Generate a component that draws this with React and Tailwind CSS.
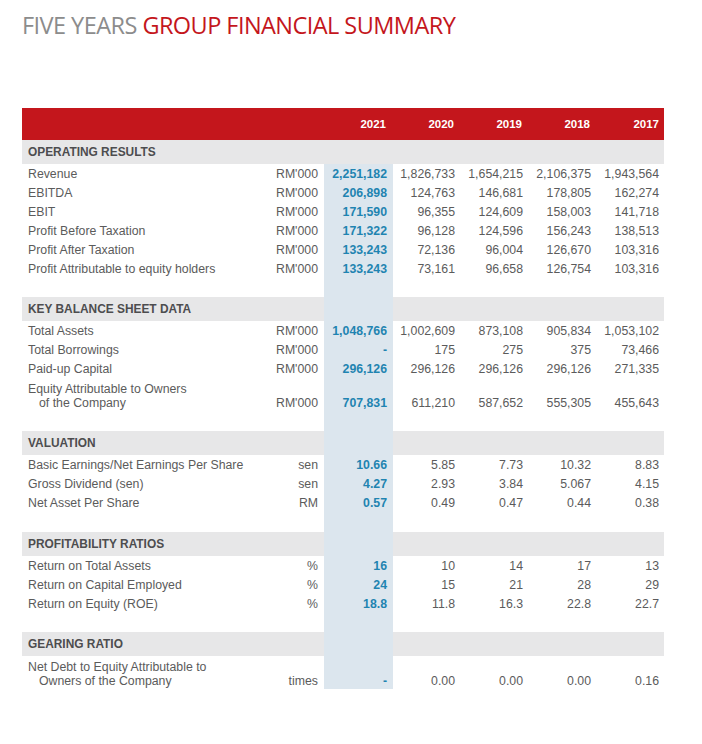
const years = ["2021", "2020", "2019", "2018", "2017"];

const sections = [
  {
    title: "OPERATING RESULTS",
    first: true,
    rows: [
      ["Revenue", "RM'000", ["2,251,182", "1,826,733", "1,654,215", "2,106,375", "1,943,564"]],
      ["EBITDA", "RM'000", ["206,898", "124,763", "146,681", "178,805", "162,274"]],
      ["EBIT", "RM'000", ["171,590", "96,355", "124,609", "158,003", "141,718"]],
      ["Profit Before Taxation", "RM'000", ["171,322", "96,128", "124,596", "156,243", "138,513"]],
      ["Profit After Taxation", "RM'000", ["133,243", "72,136", "96,004", "126,670", "103,316"]],
      ["Profit Attributable to equity holders", "RM'000", ["133,243", "73,161", "96,658", "126,754", "103,316"]],
    ],
  },
  {
    title: "KEY BALANCE SHEET DATA",
    rows: [
      ["Total Assets", "RM'000", ["1,048,766", "1,002,609", "873,108", "905,834", "1,053,102"]],
      ["Total Borrowings", "RM'000", ["-", "175", "275", "375", "73,466"]],
      ["Paid-up Capital", "RM'000", ["296,126", "296,126", "296,126", "296,126", "271,335"]],
      [["Equity Attributable to Owners", "of the Company"], "RM'000", ["707,831", "611,210", "587,652", "555,305", "455,643"]],
    ],
  },
  {
    title: "VALUATION",
    rows: [
      ["Basic Earnings/Net Earnings Per Share", "sen", ["10.66", "5.85", "7.73", "10.32", "8.83"]],
      ["Gross Dividend (sen)", "sen", ["4.27", "2.93", "3.84", "5.067", "4.15"]],
      ["Net Asset Per Share", "RM", ["0.57", "0.49", "0.47", "0.44", "0.38"]],
    ],
  },
  {
    title: "PROFITABILITY RATIOS",
    rows: [
      ["Return on Total Assets", "%", ["16", "10", "14", "17", "13"]],
      ["Return on Capital Employed", "%", ["24", "15", "21", "28", "29"]],
      ["Return on Equity (ROE)", "%", ["18.8", "11.8", "16.3", "22.8", "22.7"]],
    ],
  },
  {
    title: "GEARING RATIO",
    rows: [
      [["Net Debt to Equity Attributable to", "Owners of the Company"], "times", ["-", "0.00", "0.00", "0.00", "0.16"]],
    ],
  },
];

const colW = ["w-[69px]", "w-[68px]", "w-[68px]", "w-[68px]", "w-[67px]"];

function ValueCells({ values, pb }) {
  return (
    <>
      {values.map((v, i) => (
        <div
          key={i}
          className={`${colW[i]} ${pb} shrink-0 flex items-end justify-end ${i === 4 ? "pr-[5px]" : "pr-[6px]"} ${
            i === 0 ? "bg-[#dce6ee] font-bold text-[#1f84b1]" : "text-[#5b5b5b]"
          }`}
        >
          {v}
        </div>
      ))}
    </>
  );
}

function Row({ label, unit, values }) {
  const two = Array.isArray(label);
  const pb = two ? "pb-[1px]" : "pb-[2px]";
  return (
    <div className={`flex ${two ? "h-[33px]" : "h-[19px]"}`}>
      <div className={`w-[302px] shrink-0 flex items-end justify-between px-[6px] ${pb} text-[#5b5b5b]`}>
        {two ? (
          <div className="leading-[14px]">
            <div>{label[0]}</div>
            <div className="pl-[11px]">{label[1]}</div>
          </div>
        ) : (
          <span>{label}</span>
        )}
        <span>{unit}</span>
      </div>
      <ValueCells values={values} pb={pb} />
    </div>
  );
}

function Spacer({ h }) {
  return (
    <div className={`flex ${h}`}>
      <div className="w-[302px] shrink-0" />
      <div className="w-[69px] shrink-0 bg-[#dce6ee]" />
    </div>
  );
}

export default function App() {
  return (
    <div className="w-[702px] h-[744px] bg-white" style={{ fontFamily: "'Liberation Sans', Arial, sans-serif" }}>
      <h1
        className="pl-[22px] pt-[9px] h-[108px] text-[23.5px] leading-[32px] tracking-[-0.55px]"
        style={{ fontFamily: "'Open Sans', 'Noto Sans', sans-serif" }}
      >
        <span className="text-[#8c8c8c]">FIVE YEARS </span>
        <span className="text-[#c4161c]">GROUP FINANCIAL SUMMARY</span>
      </h1>

      <div className="ml-[22px] w-[642px] text-[12.3px] leading-[14px]">
        <div className="flex h-[32px] bg-[#c4161c] text-white font-bold text-[11.5px]">
          <div className="w-[302px] shrink-0" />
          {years.map((y, i) => (
            <div
              key={y}
              className={`${colW[i]} shrink-0 flex items-center justify-end ${i === 4 ? "pr-[5px]" : "pr-[7px]"}`}
            >
              {y}
            </div>
          ))}
        </div>

        {sections.map((s, si) => (
          <div key={s.title}>
            <div className="flex h-[24px] bg-[#e7e7e8]">
              <div className="w-[302px] shrink-0 flex items-center pl-[6px] font-bold text-[11.9px] text-[#4d4d4f]">
                {s.title}
              </div>
              <div className={`w-[69px] shrink-0 ${s.first ? "" : "bg-[#dce6ee]"}`} />
            </div>
            {s.rows.map((r, ri) => (
              <Row key={ri} label={r[0]} unit={r[1]} values={r[2]} />
            ))}
            {si === 0 && <Spacer h="h-[19px]" />}
            {si === 1 && <Spacer h="h-[20px]" />}
            {si === 2 && <Spacer h="h-[20px]" />}
            {si === 3 && <Spacer h="h-[19px]" />}
          </div>
        ))}
      </div>
    </div>
  );
}
